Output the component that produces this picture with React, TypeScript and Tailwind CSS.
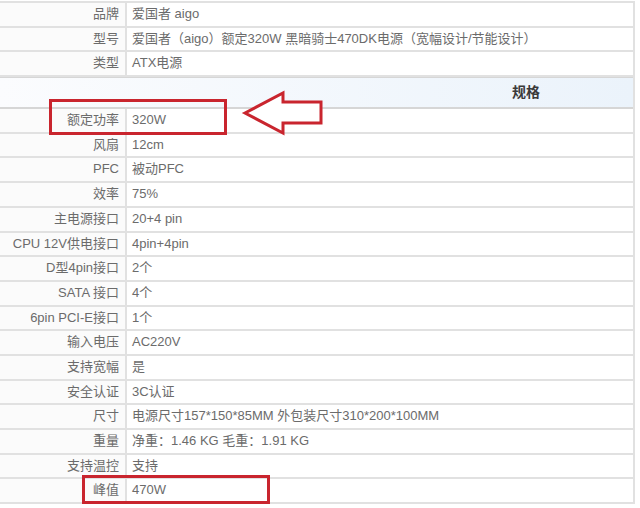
import { type ReactNode } from 'react'

const topRows: [string, string][] = [
  ['品牌', '爱国者 aigo'],
  ['型号', '爱国者（aigo）额定320W 黑暗骑士470DK电源（宽幅设计/节能设计）'],
  ['类型', 'ATX电源'],
]

const specRows: [string, string][] = [
  ['额定功率', '320W'],
  ['风扇', '12cm'],
  ['PFC', '被动PFC'],
  ['效率', '75%'],
  ['主电源接口', '20+4 pin'],
  ['CPU 12V供电接口', '4pin+4pin'],
  ['D型4pin接口', '2个'],
  ['SATA 接口', '4个'],
  ['6pin PCI-E接口', '1个'],
  ['输入电压', 'AC220V'],
  ['支持宽幅', '是'],
  ['安全认证', '3C认证'],
  ['尺寸', '电源尺寸157*150*85MM 外包装尺寸310*200*100MM'],
  ['重量', '净重：1.46 KG 毛重：1.91 KG'],
  ['支持温控', '支持'],
  ['峰值', '470W'],
]

function Row({ label, children }: { label: string; children: ReactNode }) {
  return (
    <div className="flex h-[24.7px] border-b-2 border-[#e1e1e1]">
      <div className="w-[127px] shrink-0 bg-[#fbfbfb] border-r-2 border-[#e1e1e1] text-right pr-[6px] leading-[22px] whitespace-nowrap">
        {label}
      </div>
      <div className="flex-1 pl-[5px] leading-[22px] whitespace-nowrap bg-white">{children}</div>
    </div>
  )
}

function App() {
  return (
    <div
      className="relative w-[640px] h-[508px] overflow-hidden bg-white pt-[1px] text-[13px] text-[#6b6b6b]"
      style={{ fontFamily: '"Liberation Sans", Arial, "Noto Sans CJK SC", sans-serif' }}
    >
      <div className="w-[635px] border-t-2 border-r-2 border-[#e1e1e1]">
        {topRows.map(([l, v]) => (
          <Row key={l} label={l}>{v}</Row>
        ))}
        {/* spec header */}
        <div className="h-[32px] border-b-2 border-t border-[#d6d6d6] bg-gradient-to-r from-[#fbfcfe] to-[#ebf3fb] flex items-center justify-end pr-[93px]">
          <span className="font-bold text-[14px] text-[#3a3a3a]">规格</span>
        </div>
        {specRows.map(([l, v]) => (
          <Row key={l} label={l}>{v}</Row>
        ))}
      </div>

      {/* annotations */}
      <div className="absolute left-[49px] top-[99px] w-[178px] h-[36px] border-[3px] border-[#c9252e]" />
      <div className="absolute left-[82px] top-[475px] w-[188px] h-[29px] border-[3px] border-[#c9252e]" />
      <svg className="absolute left-[240px] top-[88px]" width="90" height="50" viewBox="0 0 90 50">
        <polygon
          points="5,25 43,5 43,14 81,14 81,35 43,35 43,45"
          fill="white"
          stroke="#c9252e"
          strokeWidth="3"
          strokeLinejoin="miter"
        />
      </svg>
    </div>
  )
}

export default App
